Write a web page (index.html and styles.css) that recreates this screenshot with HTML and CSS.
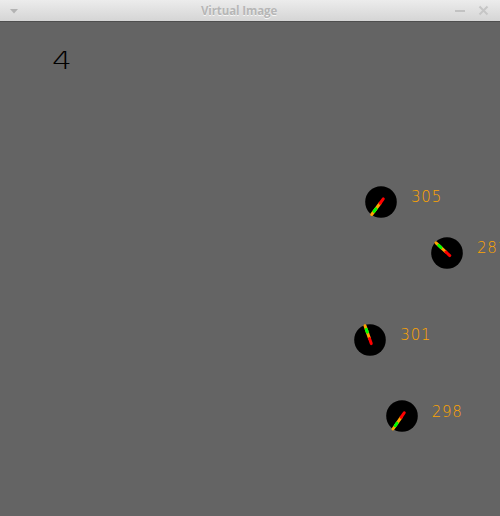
FILE: index.html
```html
<!DOCTYPE html>
<html>
<head>
<meta charset="utf-8">
<link rel="stylesheet" href="styles.css">
</head>
<body>
<div class="window">
  <div class="titlebar">
    <div class="tb-left">
      <svg class="menu-arrow" width="8" height="5" viewBox="0 0 8 5"><path d="M0 0 H8 L4 4.5 Z" fill="#b3b3b3"/></svg>
    </div>
    <div class="tb-title">Virtual Image</div>
    <div class="tb-right">
      <svg class="btn-min" width="10" height="4" viewBox="0 0 10 4"><rect x="0" y="1" width="10" height="2" fill="#c2c2c2"/></svg>
      <svg class="btn-close" width="11" height="11" viewBox="0 0 11 11"><path d="M1.5 1.5 L9.5 9.5 M9.5 1.5 L1.5 9.5" stroke="#c6c6c6" stroke-width="2" fill="none"/></svg>
    </div>
  </div>
  <div class="canvas">
    <div class="count">4</div>

    <div class="gauge" style="left:364px;top:162.5px">
      <svg width="34" height="34" viewBox="-17 -17 34 34">
        <circle r="15.8" fill="#000"/>
        <line x1="-0.9" y1="1.25" x2="-9.3" y2="12.5" class="g-orange"/>
        <line x1="-5.1" y1="6.9" x2="-7.0" y2="9.4" class="g-green"/>
        <line x1="2.3" y1="-3.1" x2="-0.9" y2="1.25" class="g-red"/>
      </svg>
      <span class="label">305</span>
    </div>

    <div class="gauge" style="left:430px;top:213.5px">
      <svg width="34" height="34" viewBox="-17 -17 34 34">
        <circle r="15.8" fill="#000"/>
        <line x1="-1.1" y1="-1.0" x2="-11" y2="-10.2" class="g-orange"/>
        <line x1="-6.05" y1="-5.6" x2="-8.25" y2="-7.65" class="g-green"/>
        <line x1="2.75" y1="2.55" x2="-1.1" y2="-1.0" class="g-red"/>
      </svg>
      <span class="label">281</span>
    </div>

    <div class="gauge" style="left:353.3px;top:301px">
      <svg width="34" height="34" viewBox="-17 -17 34 34">
        <circle r="15.8" fill="#000"/>
        <line x1="-0.5" y1="-1.4" x2="-5" y2="-14.3" class="g-orange"/>
        <line x1="-2.75" y1="-7.9" x2="-3.75" y2="-10.7" class="g-green"/>
        <line x1="1.25" y1="3.6" x2="-0.5" y2="-1.4" class="g-red"/>
      </svg>
      <span class="label">301</span>
    </div>

    <div class="gauge" style="left:384.7px;top:377.3px">
      <svg width="34" height="34" viewBox="-17 -17 34 34">
        <circle r="15.8" fill="#000"/>
        <line x1="-0.9" y1="1.3" x2="-9" y2="13" class="g-orange"/>
        <line x1="-4.95" y1="7.15" x2="-6.75" y2="9.75" class="g-green"/>
        <line x1="2.25" y1="-3.25" x2="-0.9" y2="1.3" class="g-red"/>
      </svg>
      <span class="label">298</span>
    </div>
  </div>
</div>
</body>
</html>
```

FILE: styles.css
```css
html, body {
  margin: 0;
  padding: 0;
  background: #646464;
}

.window {
  width: 500px;
  height: 516px;
  display: flex;
  flex-direction: column;
  overflow: hidden;
}

.titlebar {
  height: 22px;
  flex: 0 0 22px;
  display: flex;
  align-items: center;
  background: linear-gradient(#ececec, #d5d5d5);
  box-sizing: border-box;
  border-bottom: 1px solid #4e4e4e;
}

.tb-left {
  width: 30px;
  display: flex;
  align-items: center;
  padding-left: 10px;
  box-sizing: border-box;
}

.menu-arrow {
  display: block;
  margin-top: 1px;
}

.tb-title {
  flex: 1;
  text-align: center;
  font-family: "Open Sans", "DejaVu Sans", sans-serif;
  font-weight: 700;
  font-size: 11.5px;
  color: #b6b6b6;
  text-shadow: 0 1px 0 #f6f6f6;
  letter-spacing: -0.1px;
}

.tb-right {
  width: 52px;
  display: flex;
  align-items: center;
  gap: 13px;
  padding-left: 7px;
  box-sizing: border-box;
}

.btn-min {
  display: block;
}

.btn-close {
  display: block;
}

.canvas {
  position: relative;
  flex: 1;
  background: #646464;
  overflow: hidden;
}

.count {
  position: absolute;
  left: 52px;
  top: 27px;
  font-family: "DejaVu Sans ExtraLight", "DejaVu Sans", sans-serif;
  font-weight: 200;
  font-size: 24px;
  line-height: 24px;
  color: #000;
  transform: scaleX(1.3);
  transform-origin: left top;
}

.gauge {
  position: absolute;
  width: 34px;
  height: 34px;
}

.gauge svg {
  display: block;
}

.gauge line {
  stroke-width: 3;
  stroke-linecap: round;
}

.g-orange { stroke: #ffa500; }
.g-green { stroke: #00ff00; }
.g-red { stroke: #ff0000; }

.label {
  position: absolute;
  left: 47px;
  top: 5.3px;
  font-family: "DejaVu Sans ExtraLight", "DejaVu Sans", sans-serif;
  font-weight: 200;
  font-size: 15px;
  line-height: 15px;
  letter-spacing: 0.8px;
  color: #ffa500;
  white-space: nowrap;
}
```
